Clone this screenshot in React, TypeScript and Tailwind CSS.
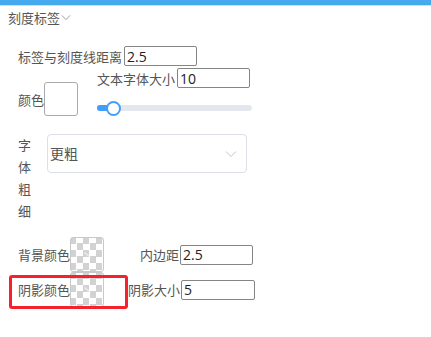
import { useState } from "react";

const labelCls = "text-[13px] text-[#555] leading-none whitespace-nowrap";
const inputCls =
  "h-[20px] w-[73px] border border-[#858585] rounded-[2px] px-[2px] text-[14px] text-[#222] outline-none font-['Open_Sans',sans-serif]";

function Chevron({ className }: { className?: string }) {
  return (
    <svg className={className} viewBox="0 0 12 8" fill="none" stroke="currentColor" strokeWidth={1}>
      <path d="M1 1.5l5 5 5-5" />
    </svg>
  );
}

// transparent colour swatch (checkerboard)
function EmptySwatch() {
  return (
    <div className="relative w-[34px] h-[35px] border border-[#c8c8c8] rounded-[3px] bg-white bg-[conic-gradient(#fff_25%,#d2d2d2_0_50%,#fff_0_75%,#d2d2d2_0)] bg-[length:13px_13px] bg-[position:-1px_-1px]">
      <svg className="absolute left-[13px] top-[14px] w-[7px] h-[6px]" viewBox="0 0 7 6">
        <path d="M0.5 0.5l6 5" stroke="#eee" strokeWidth={1.2} />
      </svg>
    </div>
  );
}

export default function App() {
  const [gap, setGap] = useState("2.5");
  const [fontSize, setFontSize] = useState("10");
  const [padding, setPadding] = useState("2.5");
  const [shadow, setShadow] = useState("5");

  return (
    <div className="w-[431px] h-[337px] bg-white font-['Noto_Sans_CJK_SC',sans-serif] relative">
      {/* top bar */}
      <div className="h-[6px] bg-[#46abee] border-b border-[#d8dde3]" />

      {/* title */}
      <div className="flex items-center pl-[8px] pt-[5px] text-[13px] text-[#555]">
        <span className="leading-none">刻度标签</span>
        <Chevron className="w-[10px] h-[7px] ml-[1px] text-[#888]" />
      </div>

      <div className="pl-[18px] pt-[22px]">
        {/* row 1 */}
        <div className="flex items-center h-[20px]">
          <span className={labelCls}>标签与刻度线距离</span>
          <input className={`${inputCls} ml-[2px]`} value={gap} onChange={(e) => setGap(e.target.value)} />
        </div>

        {/* row 2 */}
        <div className="flex items-end mt-[2px]">
          <div className="flex items-center">
            <span className={labelCls}>颜色</span>
            <div className="w-[34px] h-[34px] border border-[#aaa] rounded-[3px] bg-white" />
          </div>
          <div className="ml-[19px] flex flex-col">
            <div className="flex items-center h-[20px]">
              <span className={labelCls}>文本字体大小</span>
              <input
                className={`${inputCls} ml-[2px]`}
                value={fontSize}
                onChange={(e) => setFontSize(e.target.value)}
              />
            </div>
            <div className="relative mt-[13px] mb-[1px] h-[14px] w-[155px] flex items-center">
              <div className="h-[6px] w-full rounded-full bg-[#e4e7ed]" />
              <div className="absolute left-0 h-[6px] w-[14px] rounded-l-full bg-[#409eff]" />
              <div className="absolute left-[9px] w-[15px] h-[15px] rounded-full bg-white border-2 border-[#409eff]" />
            </div>
          </div>
        </div>

        {/* row 3 */}
        <div className="flex items-start mt-[18px]">
          <div className="w-[13px] text-[13px] text-[#555] leading-[22px] break-all">字体粗细</div>
          <div className="ml-[16px] w-[200px] h-[39px] border border-[#dcdfe6] rounded-[4px] flex items-center justify-between pl-[2px] pr-[9px]">
            <span className="text-[14px] text-[#555]">更粗</span>
            <Chevron className="w-[12px] h-[8px] text-[#c0c4cc]" />
          </div>
        </div>

        {/* row 4 */}
        <div className="flex items-center mt-[15px]">
          <span className={labelCls}>背景颜色</span>
          <EmptySwatch />
          <span className={`${labelCls} ml-[36px]`}>内边距</span>
          <input className={`${inputCls} ml-[1px]`} value={padding} onChange={(e) => setPadding(e.target.value)} />
        </div>

        {/* row 5 */}
        <div className="flex items-center">
          <span className={labelCls}>阴影颜色</span>
          <EmptySwatch />
          <span className={`${labelCls} ml-[24px]`}>阴影大小</span>
          <input
            className={`${inputCls} ml-[1px] w-[74px]`}
            value={shadow}
            onChange={(e) => setShadow(e.target.value)}
          />
        </div>
      </div>

      {/* highlight box */}
      <div className="absolute left-[9px] top-[275px] w-[119px] h-[34px] border-[3px] border-[#f5222d] rounded-[3px] pointer-events-none" />
    </div>
  );
}
